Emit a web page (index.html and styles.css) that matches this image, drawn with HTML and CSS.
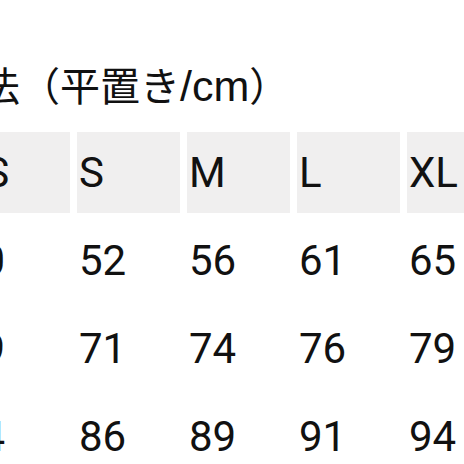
FILE: index.html
```html
<!DOCTYPE html>
<html lang="ja">
<head>
<meta charset="utf-8">
<title>サイズ表</title>
<link rel="stylesheet" href="styles.css">
</head>
<body>
<div class="page">
  <h2 class="title">寸法（平置き<span class="unit">/cm</span>）</h2>
  <div class="grid">
    <div class="cell head">XS</div>
    <div class="cell head">S</div>
    <div class="cell head">M</div>
    <div class="cell head">L</div>
    <div class="cell head">XL</div>

    <div class="cell">50</div>
    <div class="cell">52</div>
    <div class="cell">56</div>
    <div class="cell">61</div>
    <div class="cell">65</div>

    <div class="cell">69</div>
    <div class="cell">71</div>
    <div class="cell">74</div>
    <div class="cell">76</div>
    <div class="cell">79</div>

    <div class="cell">84</div>
    <div class="cell">86</div>
    <div class="cell">89</div>
    <div class="cell">91</div>
    <div class="cell">94</div>
  </div>
</div>
</body>
</html>
```

FILE: styles.css
```css
html, body {
  margin: 0;
  padding: 0;
  background: #ffffff;
  overflow: hidden;
}

.page {
  margin-left: -44px;
  width: 560px;
  color: #111111;
}

.title {
  margin: 66px 0 0 -16px;
  font-family: "Liberation Sans", "Noto Sans CJK JP", sans-serif;
  font-weight: normal;
  font-size: 40px;
  line-height: 41px;
  white-space: nowrap;
}

.unit {
  font-size: 43px;
}

.grid {
  display: grid;
  grid-template-columns: 114px repeat(4, 103px);
  grid-auto-rows: 81px;
  gap: 7px;
  margin-top: 24px;
}

.cell {
  display: flex;
  align-items: center;
  padding-left: 2px;
  font-family: Roboto, "Liberation Sans", sans-serif;
  font-size: 42px;
  color: #111111;
}

.head {
  background: #f0efef;
}
```
